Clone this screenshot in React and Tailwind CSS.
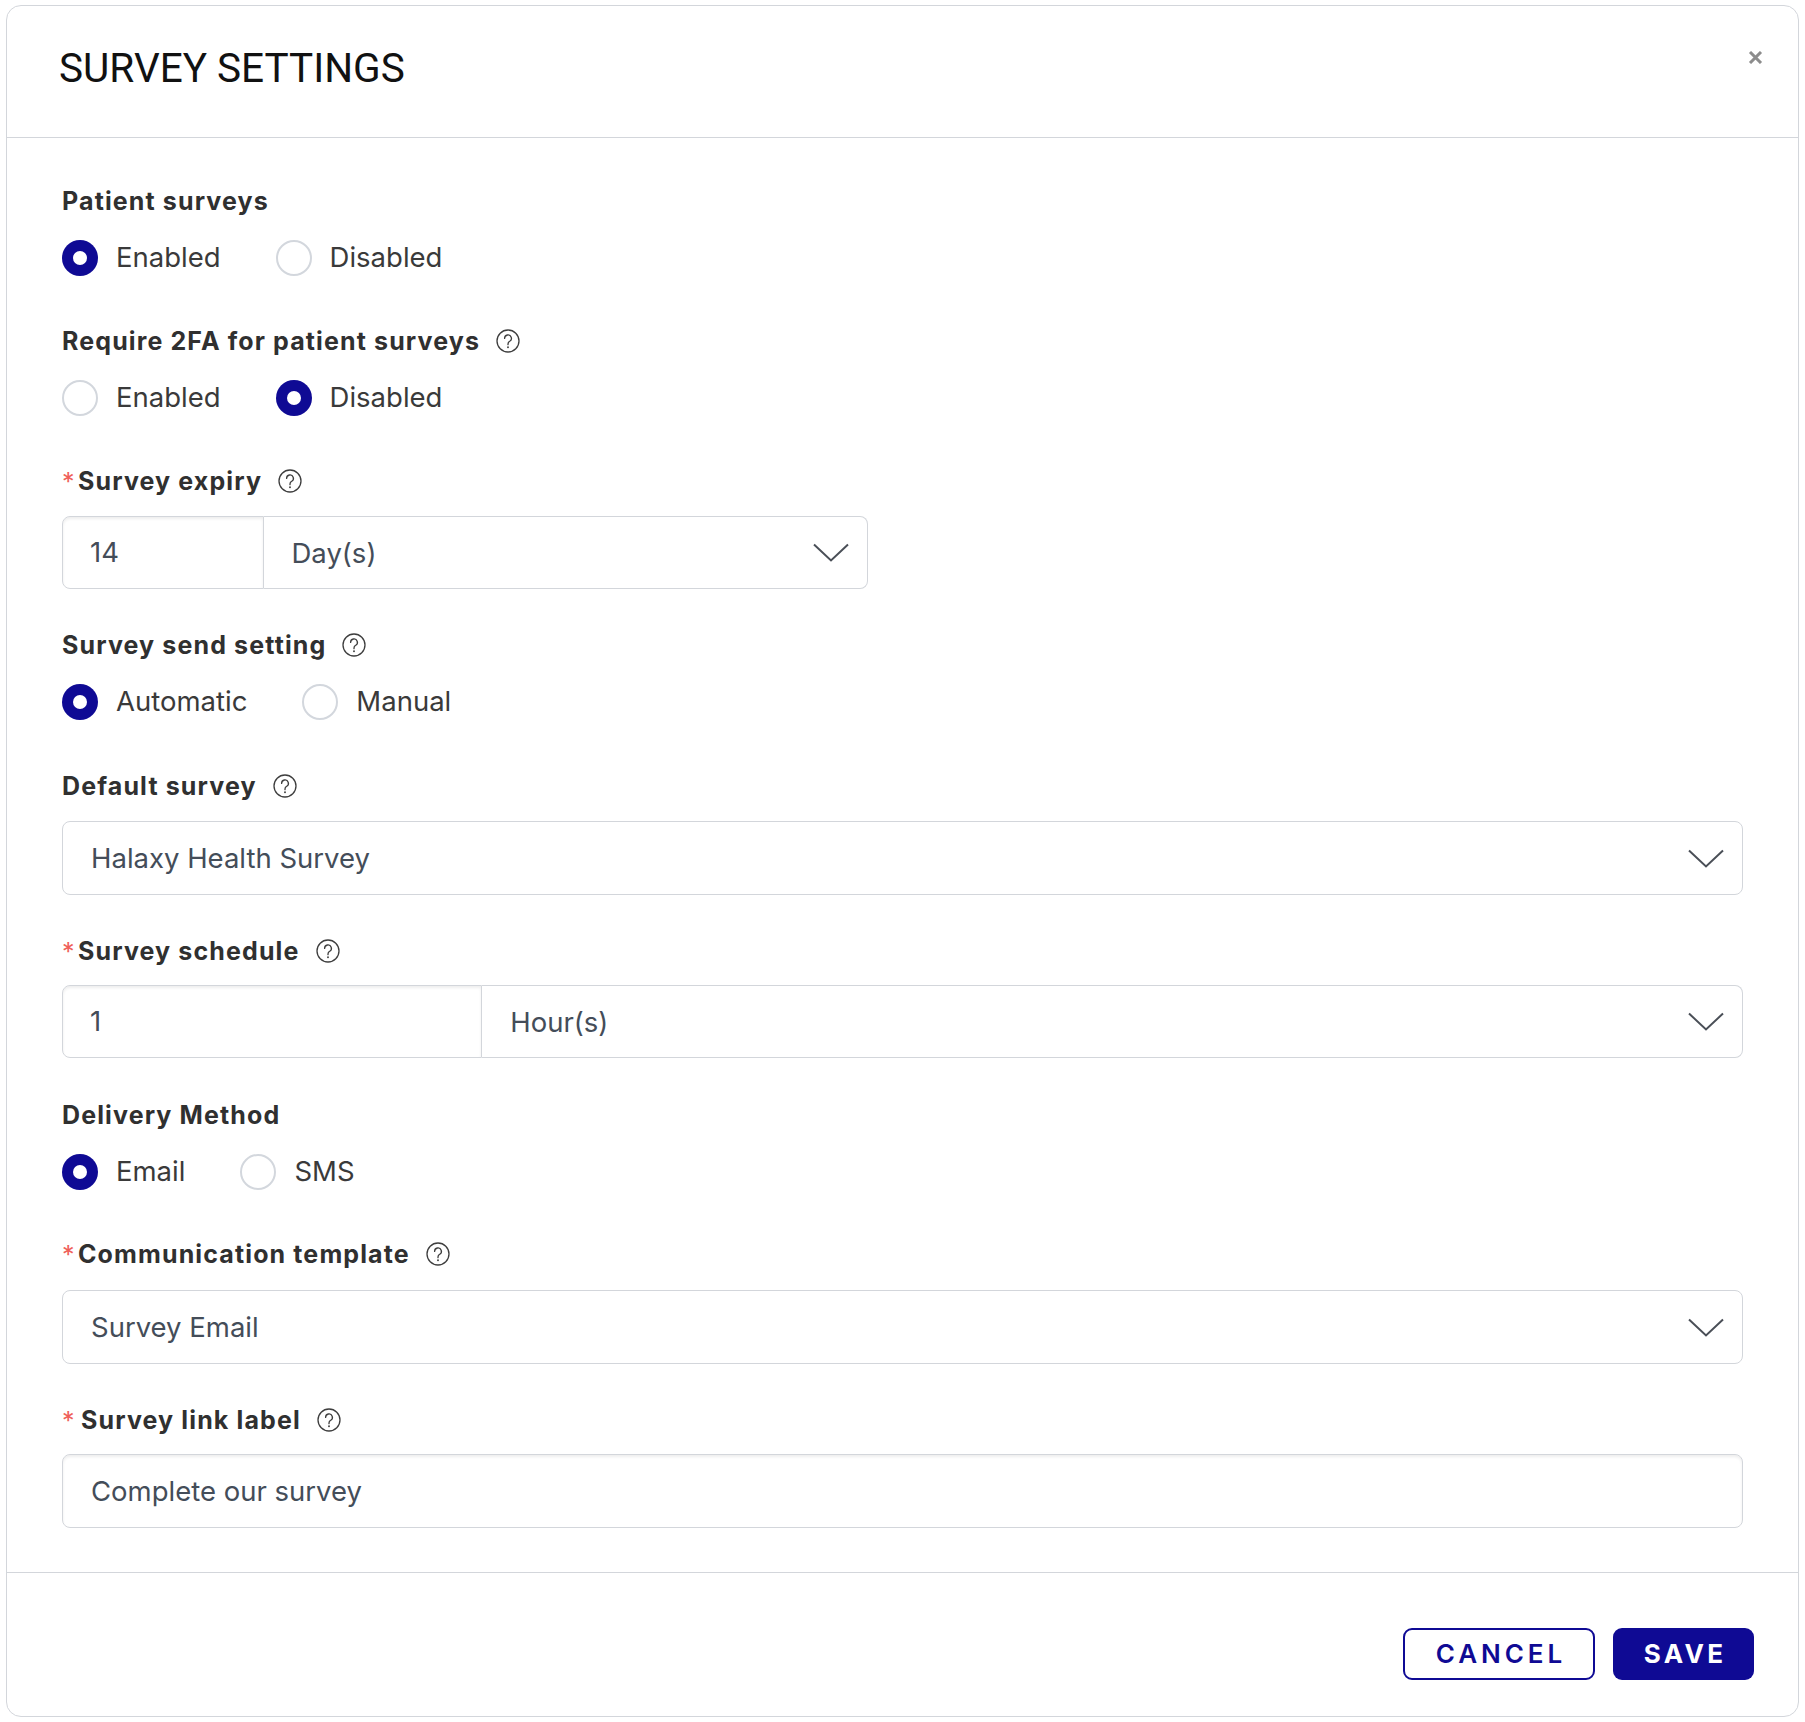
import React from "react";

const BORDER = "border-[#d3d6db]";

function HelpIcon() {
  return (
    <svg width="24" height="24" viewBox="0 0 24 24" className="ml-[16px] shrink-0" fill="none">
      <circle cx="12" cy="12" r="11" stroke="#3e3e3e" strokeWidth="1.3" />
      <path
        d="M8.6 9.4a3.4 3.4 0 1 1 5.1 2.9c-1.1.6-1.7 1.3-1.7 2.6v.8"
        stroke="#3e3e3e"
        strokeWidth="1.3"
        strokeLinecap="round"
      />
      <circle cx="12" cy="18.2" r="0.95" fill="#3e3e3e" />
    </svg>
  );
}

function Chevron() {
  return (
    <svg width="36" height="19" viewBox="0 0 36 19" fill="none" className="shrink-0">
      <path d="M1 1.5 L18 17.5 L35 1.5" stroke="#4a4f57" strokeWidth="2" />
    </svg>
  );
}

function Label({ children, required, help, wide }) {
  return (
    <div className="flex items-center h-[32px] text-[25px] leading-[32px] font-bold tracking-[0.045em] text-[#303030]">
      {required && (
        <span
          className={`${wide ? "w-[19px]" : "w-[16px]"} shrink-0 text-[25px] leading-none font-normal tracking-normal text-[#ef5f5a] translate-y-[1px]`}
        >
          *
        </span>
      )}
      <span>{children}</span>
      {help && <HelpIcon />}
    </div>
  );
}

function Radio({ checked, label }) {
  return (
    <div className="flex items-center mr-[55px]">
      {checked ? (
        <div className="w-[36px] h-[36px] rounded-full bg-[#0f0a94] flex items-center justify-center">
          <div className="w-[14px] h-[14px] rounded-full bg-white" />
        </div>
      ) : (
        <div className="w-[36px] h-[36px] rounded-full border-2 border-[#d3d7dd] bg-white" />
      )}
      <span className="ml-[18px] text-[27.5px] leading-none text-[#3a3a3a]">{label}</span>
    </div>
  );
}

function RadioGroup({ options, value }) {
  return (
    <div className="flex items-center h-[36px] mt-[23px]">
      {options.map((o) => (
        <Radio key={o} label={o} checked={o === value} />
      ))}
    </div>
  );
}

function Select({ value, className = "", h = "h-[74px]", textPad = "pt-[2px]" }) {
  return (
    <div
      className={`flex items-center justify-between ${h} border ${BORDER} bg-white pl-[28px] pr-[18px] text-[27.5px] text-[#444d59] ${className}`}
    >
      <span className={textPad}>{value}</span>
      <Chevron />
    </div>
  );
}

function NumberSelect({ num, unit, width, mt }) {
  return (
    <div className={`flex h-[73px] ${mt} ${width}`}>
      <div
        className={`w-1/4 h-full border ${BORDER} rounded-l-[8px] pl-[27px] flex items-center text-[27.5px] text-[#444d59] shadow-[inset_0_2px_3px_rgba(0,0,0,0.07)]`}
      >
        {num}
      </div>
      <Select value={unit} h="h-[73px]" textPad="pt-[3px]" className="flex-1 border-l-0 rounded-r-[8px]" />
    </div>
  );
}

export default function App() {
  return (
    <div className="bg-white min-h-[1722px] px-[6px] pt-[5px] pb-[6px] font-['Inter',sans-serif]">
      <div className={`relative border ${BORDER} rounded-[15px] bg-white`}>
        {/* Header */}
        <div className={`h-[132px] border-b ${BORDER} pl-[52px] pt-[42px]`}>
          <h1 className="font-['Roboto',sans-serif] text-[40.5px] leading-[40px] font-normal text-[#111111]">
            SURVEY SETTINGS
          </h1>
        </div>
        <button className="absolute top-[45px] right-[35px] w-[15px] h-[13px] flex items-center justify-center">
          <svg width="15" height="13" viewBox="0 0 15 13">
            <path d="M2 1 L13 12 M13 1 L2 12" stroke="#8c8c8c" strokeWidth="3" />
          </svg>
        </button>

        {/* Body */}
        <div className={`px-[55px] pt-[47px] pb-[44px] border-b ${BORDER}`}>
          <div>
            <Label>Patient surveys</Label>
            <RadioGroup options={["Enabled", "Disabled"]} value="Enabled" />
          </div>

          <div className="mt-[49px]">
            <Label help>Require 2FA for patient surveys</Label>
            <RadioGroup options={["Enabled", "Disabled"]} value="Disabled" />
          </div>

          <div className="mt-[49px]">
            <Label required help>
              Survey expiry
            </Label>
            <NumberSelect num="14" unit="Day(s)" width="w-[806px]" mt="mt-[19px]" />
          </div>

          <div className="mt-[40px]">
            <Label help>Survey send setting</Label>
            <RadioGroup options={["Automatic", "Manual"]} value="Automatic" />
          </div>

          <div className="mt-[50px]">
            <Label help>Default survey</Label>
            <Select value="Halaxy Health Survey" className="mt-[19px] rounded-[8px]" />
          </div>

          <div className="mt-[40px]">
            <Label required help>
              Survey schedule
            </Label>
            <NumberSelect num="1" unit="Hour(s)" width="w-full" mt="mt-[18px]" />
          </div>

          <div className="mt-[41px]">
            <Label>Delivery Method</Label>
            <RadioGroup options={["Email", "SMS"]} value="Email" />
          </div>

          <div className="mt-[48px]">
            <Label required help>
              Communication template
            </Label>
            <Select value="Survey Email" className="mt-[20px] rounded-[8px]" />
          </div>

          <div className="mt-[40px]">
            <Label required help wide>
              Survey link label
            </Label>
            <div
              className={`mt-[18px] h-[74px] border ${BORDER} rounded-[8px] pl-[28px] flex items-center text-[27.5px] text-[#444d59] shadow-[inset_0_2px_3px_rgba(0,0,0,0.07)]`}
            >
              <span className="pt-[1px]">Complete our survey</span>
            </div>
          </div>
        </div>

        {/* Footer */}
        <div className="flex justify-end gap-[18px] pt-[55px] pb-[36px] pr-[44px]">
          <button className="w-[192px] h-[52px] border-2 border-[#0f0a94] rounded-[9px] bg-white text-[#0f0a94] text-[26px] font-semibold tracking-[0.15em] pl-[0.15em] leading-none flex items-center justify-center">
            CANCEL
          </button>
          <button className="w-[141px] h-[52px] rounded-[9px] bg-[#0f0a94] text-white text-[26px] font-bold tracking-[0.13em] pl-[0.13em] leading-none flex items-center justify-center">
            SAVE
          </button>
        </div>
      </div>
    </div>
  );
}
